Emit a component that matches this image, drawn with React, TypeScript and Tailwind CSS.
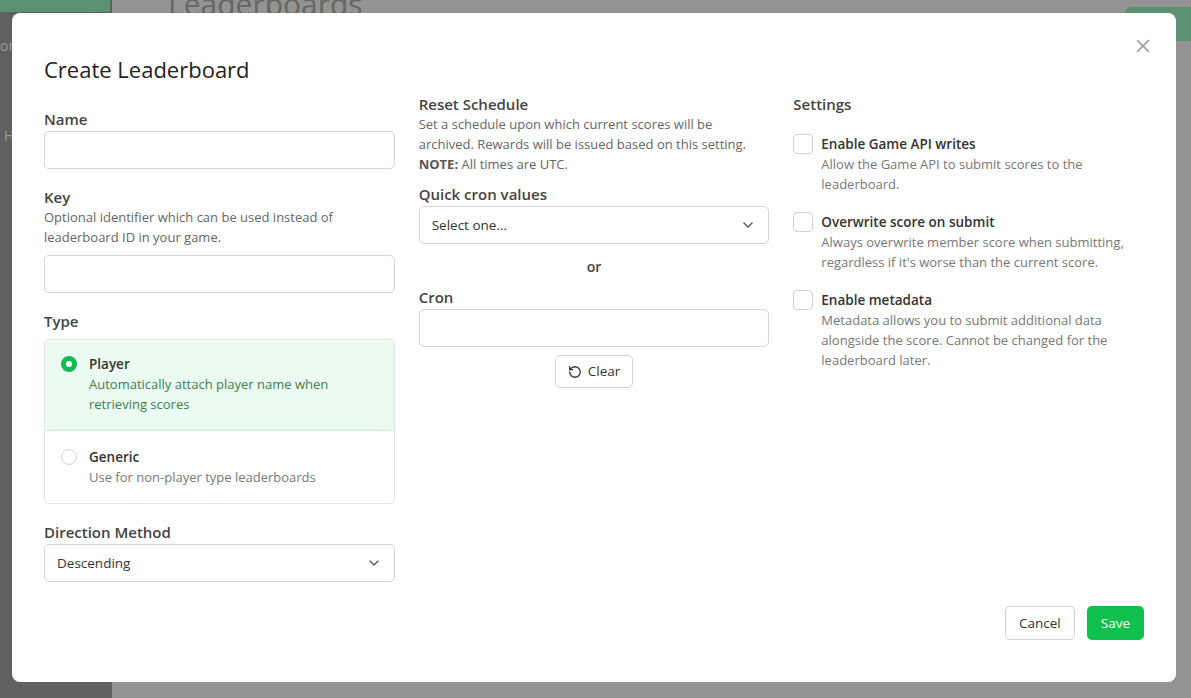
import { X, ChevronDown, RotateCcw } from "lucide-react";

function Label(props: any) {
  return <div className="text-[15px] font-semibold text-[#444] leading-5">{props.children}</div>;
}

function Input() {
  return <div className="h-[38px] rounded-[5px] border border-[#d4d4d4] bg-white" />;
}

function Select(props: any) {
  return (
    <div className="h-[38px] rounded-[5px] border border-[#d4d4d4] bg-white flex items-center justify-between px-3 text-[13.5px] text-[#333]">
      <span>{props.value}</span>
      <ChevronDown size={16} className="text-[#555]" />
    </div>
  );
}

function Check(props: any) {
  return (
    <div className="flex gap-2">
      <div className="w-[20px] h-[20px] rounded-[4px] border border-[#cfcfcf] shrink-0" />
      <div>
        <div className="text-[13.5px] font-semibold text-[#333] leading-5">{props.title}</div>
        <div className="text-[13px] text-[#777] leading-5">{props.desc}</div>
      </div>
    </div>
  );
}

export default function App() {
  return (
    <div className="relative w-[1191px] h-[698px] overflow-hidden flex" style={{ fontFamily: '"Open Sans", "Noto Sans", sans-serif' }}>
      <div className="w-[112px] bg-[#5e6062] flex flex-col">
        <div className="h-[12px] w-[110px] bg-[#5b9073]" />
        <div className="text-[#9a9a9a] text-sm mt-[24px]">on</div>
        <div className="text-[#9a9a9a] text-sm mt-[70px] ml-1">H</div>
      </div>
      <div className="flex-1 bg-[#939393] relative overflow-hidden">
        <div className="text-[#666] text-[30px] leading-9 ml-[56px] -mt-[14px]">Leaderboards</div>
        <div className="absolute right-0 top-[7px] w-[66px] h-[34px] rounded-tl-[6px] bg-[#5b9073]" />
      </div>

      <div className="absolute left-[12px] top-[13px] w-[1164px] h-[669px] bg-white rounded-[8px] px-[32px] pt-[42px]">
        <X size={22} strokeWidth={1.75} className="absolute right-[22px] top-[22px] text-[#999]" />
        <div className="text-[22px] text-[#222] leading-7">Create Leaderboard</div>
        <div className="grid grid-cols-3 gap-[24px] -mt-[6px]">
          <div className="flex flex-col">
            <div className="mt-[32px]"><Label>Name</Label></div>
            <div className="mt-[2px]"><Input /></div>
            <div className="mt-[18px]"><Label>Key</Label></div>
            <div className="text-[13px] text-[#666] leading-5">Optional identifier which can be used instead of leaderboard ID in your game.</div>
            <div className="mt-[8px]"><Input /></div>
            <div className="mt-[18px]"><Label>Type</Label></div>
            <div className="mt-[8px] rounded-[5px] border border-[#e2e2e2] overflow-hidden">
              <div className="bg-[#ecfbf1] border-b border-[#c9efd6] px-[16px] pt-[14px] pb-[16px] flex gap-[12px]">
                <div className="w-[16px] h-[16px] rounded-full bg-[#18b855] flex items-center justify-center mt-[2px] shrink-0">
                  <div className="w-[6px] h-[6px] rounded-full bg-white" />
                </div>
                <div>
                  <div className="text-[13.5px] font-semibold text-[#333] leading-5">Player</div>
                  <div className="text-[13px] text-[#3b7f52] leading-5">Automatically attach player name when retrieving scores</div>
                </div>
              </div>
              <div className="px-[16px] pt-[16px] pb-[16px] flex gap-[12px]">
                <div className="w-[16px] h-[16px] rounded-full border border-[#d4d4d4] mt-[2px] shrink-0" />
                <div>
                  <div className="text-[13.5px] font-semibold text-[#333] leading-5">Generic</div>
                  <div className="text-[13px] text-[#777] leading-5">Use for non-player type leaderboards</div>
                </div>
              </div>
            </div>
            <div className="mt-[18px]"><Label>Direction Method</Label></div>
            <div className="mt-[2px]"><Select value="Descending" /></div>
          </div>

          <div className="flex flex-col">
            <div className="mt-[17px]"><Label>Reset Schedule</Label></div>
            <div className="text-[13px] text-[#666] leading-5">Set a schedule upon which current scores will be archived. Rewards will be issued based on this setting. <b className="text-[#555]">NOTE:</b> All times are UTC.</div>
            <div className="mt-[10px]"><Label>Quick cron values</Label></div>
            <div className="mt-[2px]"><Select value="Select one..." /></div>
            <div className="text-center text-[14px] font-semibold text-[#444] mt-[12px]">or</div>
            <div className="mt-[10px]"><Label>Cron</Label></div>
            <div className="mt-[2px]"><Input /></div>
            <div className="flex justify-center mt-[8px]">
              <div className="h-[33px] px-[12px] rounded-[5px] border border-[#d4d4d4] flex items-center gap-[6px] text-[13.5px] text-[#333]">
                <RotateCcw size={14} strokeWidth={2.25} /> Clear
              </div>
            </div>
          </div>

          <div className="flex flex-col">
            <div className="mt-[17px]"><Label>Settings</Label></div>
            <div className="mt-[20px] flex flex-col gap-[18px]">
              <Check title="Enable Game API writes" desc="Allow the Game API to submit scores to the leaderboard." />
              <Check title="Overwrite score on submit" desc="Always overwrite member score when submitting, regardless if it's worse than the current score." />
              <Check title="Enable metadata" desc="Metadata allows you to submit additional data alongside the score. Cannot be changed for the leaderboard later." />
            </div>
          </div>
        </div>
        <div className="flex justify-end gap-[12px] mt-[24px]">
          <div className="h-[34px] px-[13px] rounded-[5px] border border-[#d4d4d4] flex items-center text-[13.5px] text-[#333]">Cancel</div>
          <div className="h-[34px] px-[14px] rounded-[5px] bg-[#0fc04f] flex items-center text-[13.5px] text-white">Save</div>
        </div>
      </div>
    </div>
  );
}
